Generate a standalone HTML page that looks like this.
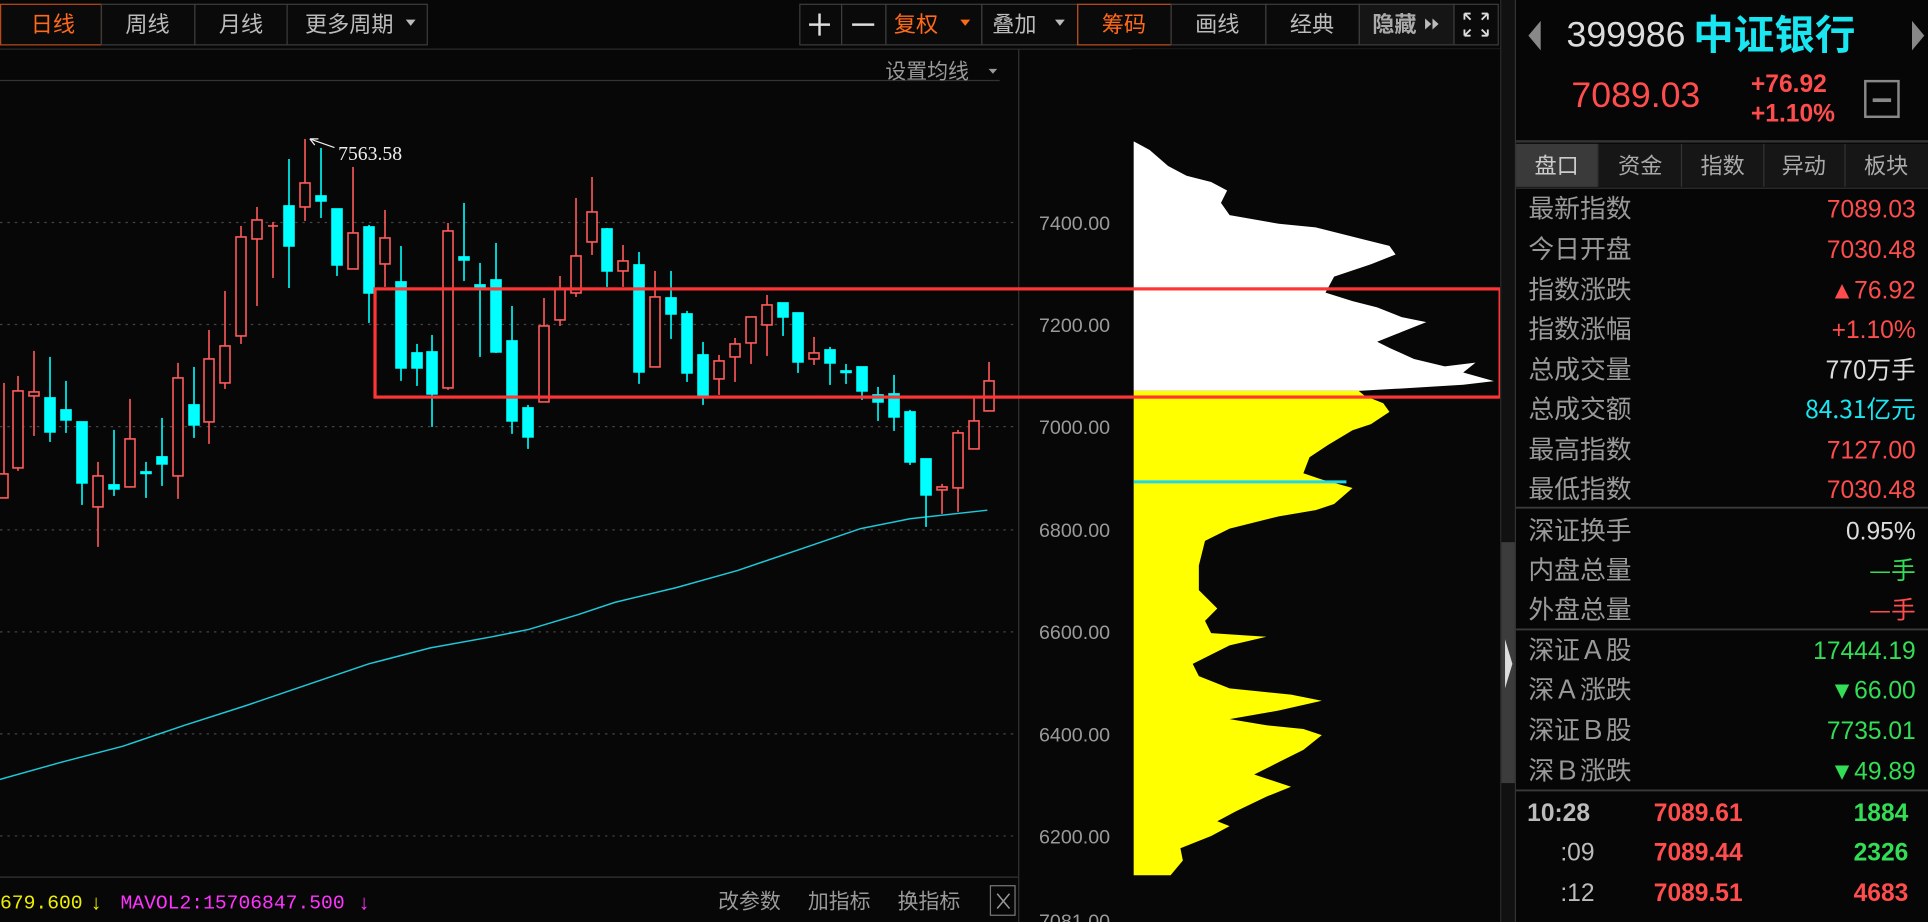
<!DOCTYPE html>
<html><head><meta charset="utf-8"><style>
html,body{margin:0;padding:0;background:#070707;overflow:hidden}
svg{display:block}
text{font-family:"Liberation Sans","Noto Sans CJK SC",sans-serif}
.cn{font-family:"Noto Sans CJK SC","WenQuanYi Zen Hei",sans-serif}
</style></head><body>
<svg width="1928" height="922" viewBox="0 0 1568 750" preserveAspectRatio="none" xmlns="http://www.w3.org/2000/svg">
<rect x="0" y="0" width="1568" height="750" fill="#070707"/>
<!-- toolbar -->
<g stroke="#3c3c3c" stroke-width="1" fill="#0a0a0a">
<rect x="0.5" y="3.5" width="82" height="33" stroke="#b84a1a"/>
<rect x="82.5" y="3.5" width="76" height="33"/>
<rect x="158.5" y="3.5" width="75" height="33"/>
<rect x="233.5" y="3.5" width="114" height="33"/>
<rect x="650.5" y="3.5" width="34" height="33"/>
<rect x="684.5" y="3.5" width="36" height="33"/>
<rect x="720.5" y="3.5" width="78" height="33"/>
<rect x="798.5" y="3.5" width="78" height="33"/>
<rect x="876.5" y="3.5" width="76" height="33" stroke="#c0501e"/>
<rect x="952.5" y="3.5" width="77" height="33"/>
<rect x="1029.5" y="3.5" width="76" height="33"/>
<rect x="1105.5" y="3.5" width="77" height="33" fill="#151515"/>
<rect x="1182.5" y="3.5" width="36" height="33"/>
</g>
<g class="cn" font-size="18" text-anchor="middle">
<text x="43" y="26" fill="#ff6a1a" class="cn">日线</text>
<text x="120" y="26" fill="#bbbbbb" class="cn">周线</text>
<text x="196" y="26" fill="#bbbbbb" class="cn">月线</text>
<text x="284" y="26" fill="#bbbbbb" class="cn">更多周期</text>
<text x="745" y="26" fill="#ff6a1a" class="cn">复权</text>
<text x="825" y="26" fill="#bbbbbb" class="cn">叠加</text>
<text x="914" y="26" fill="#ff6a1a" class="cn">筹码</text>
<text x="990" y="26" fill="#bbbbbb" class="cn">画线</text>
<text x="1067" y="26" fill="#bbbbbb" class="cn">经典</text>
<text x="1134" y="26" fill="#aaaaaa" font-weight="bold" class="cn">隐藏</text>
</g>
<path d="M330 16l8 0l-4 5z" fill="#bbb"/>
<path d="M781 16l8 0l-4 5z" fill="#ff6a1a"/>
<path d="M858 16l8 0l-4 5z" fill="#bbb"/>
<path d="M1159 15l5 4.5l-5 4.5zM1165 15l5 4.5l-5 4.5z" fill="#bbb"/>
<g stroke="#ddd" stroke-width="2" fill="none">
<path d="M658 20h17M666.5 11v18"/>
<path d="M693 20h18"/>
<path d="M1191 11h5M1191 11v5M1191 11l5 5M1210 11h-5M1210 11v5M1210 11l-5 5M1191 29h5M1191 29v-5M1191 29l5-5M1210 29h-5M1210 29v-5M1210 29l-5-5" stroke-width="1.5"/>
</g>
<!-- panel lines -->
<line x1="0" y1="40" x2="1220" y2="40" stroke="#2a2a2a"/>
<line x1="828.5" y1="40" x2="828.5" y2="750" stroke="#333"/>
<line x1="0" y1="65.5" x2="813" y2="65.5" stroke="#333"/>
<text x="720" y="64" font-size="17" fill="#999" class="cn">设置均线</text>
<path d="M804 56l7 0l-3.5 4z" fill="#999"/>
<!-- top right icons -->
<g>
<rect x="1103" y="48" width="10" height="2" fill="#ddd"/><rect x="1103" y="52" width="14" height="2" fill="#ddd"/>
<rect x="1103" y="56" width="17" height="2" fill="#ee0"/><rect x="1103" y="60" width="14" height="2" fill="#ee0"/>
<rect x="1103" y="64" width="8" height="2" fill="#ee0"/><rect x="1103" y="68" width="4" height="2" fill="#ee0"/>
<path d="M1133 47l17 18l-11 2l-6 8z" fill="#777"/>
<path d="M1163 50l14 12l-9 2l-5 7z" fill="#777"/>
<circle cx="1201" cy="58" r="8" fill="none" stroke="#777" stroke-width="3" stroke-dasharray="3 2.3"/>
<circle cx="1201" cy="58" r="4" fill="none" stroke="#777" stroke-width="2"/>
</g>
<!-- grid -->
<g stroke="#444" stroke-width="1" stroke-dasharray="2 4">
<line x1="0" y1="181" x2="828" y2="181"/><line x1="0" y1="264" x2="828" y2="264"/>
<line x1="0" y1="347" x2="828" y2="347"/><line x1="0" y1="431" x2="828" y2="431"/>
<line x1="0" y1="514" x2="828" y2="514"/><line x1="0" y1="597" x2="828" y2="597"/>
<line x1="0" y1="680" x2="828" y2="680"/>
</g>
<g font-family="Liberation Mono,monospace" font-size="16" fill="#9a9a9a" style="font-family:'Liberation Mono',monospace">
<text x="845" y="187">7400.00</text><text x="845" y="270">7200.00</text>
<text x="845" y="353">7000.00</text><text x="845" y="437">6800.00</text>
<text x="845" y="520">6600.00</text><text x="845" y="603">6400.00</text>
<text x="845" y="686">6200.00</text><text x="845" y="755">7081.00</text>
</g>
<!-- MA line -->
<polyline points="0,634 50,620 100,607 150,590 200,574 250,557 300,540 350,527 400,518 430,512 470,500 500,490 550,478 600,464 650,447 700,430 740,422 803,415" fill="none" stroke="#1fc8d8" stroke-width="1.2"/>
<!-- candles (original coords) -->
<g transform="scale(0.8133)" stroke-width="1.6">
<g stroke="#00ffff" fill="#00ffff">
<line x1="50" y1="357" x2="50" y2="442"/><rect x="45" y="398" width="10" height="34"/>
<line x1="66" y1="381" x2="66" y2="433"/><rect x="61" y="410" width="10" height="10"/>
<line x1="82" y1="422" x2="82" y2="505"/><rect x="77" y="422" width="10" height="61"/>
<line x1="114" y1="430" x2="114" y2="496"/><rect x="109" y="485" width="10" height="4"/>
<line x1="146" y1="462" x2="146" y2="498"/><rect x="141" y="472" width="10" height="1.5"/>
<line x1="162" y1="418" x2="162" y2="486"/><rect x="157" y="457" width="10" height="7"/>
<line x1="194" y1="367" x2="194" y2="438"/><rect x="189" y="405" width="10" height="20"/>
<line x1="289" y1="159" x2="289" y2="288"/><rect x="284" y="206" width="10" height="40"/>
<line x1="321" y1="148" x2="321" y2="218"/><rect x="316" y="196" width="10" height="5"/>
<line x1="337" y1="209" x2="337" y2="276"/><rect x="332" y="209" width="10" height="56"/>
<line x1="369" y1="225" x2="369" y2="323"/><rect x="364" y="227" width="10" height="66"/>
<line x1="401" y1="246" x2="401" y2="381"/><rect x="396" y="282" width="10" height="86"/>
<line x1="417" y1="344" x2="417" y2="386"/><rect x="412" y="353" width="10" height="15"/>
<line x1="432" y1="335" x2="432" y2="427"/><rect x="427" y="352" width="10" height="42"/>
<line x1="464" y1="203" x2="464" y2="281"/><rect x="459" y="257" width="10" height="3"/>
<line x1="480" y1="263" x2="480" y2="357"/><rect x="475" y="285" width="10" height="2"/>
<line x1="496" y1="243" x2="496" y2="353"/><rect x="491" y="280" width="10" height="72"/>
<line x1="512" y1="306" x2="512" y2="434"/><rect x="507" y="341" width="10" height="80"/>
<line x1="528" y1="405" x2="528" y2="449"/><rect x="523" y="408" width="10" height="29"/>
<line x1="607" y1="228" x2="607" y2="287"/><rect x="602" y="229" width="10" height="42"/>
<line x1="639" y1="252" x2="639" y2="384"/><rect x="634" y="265" width="10" height="107"/>
<line x1="671" y1="271" x2="671" y2="339"/><rect x="666" y="298" width="10" height="16"/>
<line x1="687" y1="311" x2="687" y2="382"/><rect x="682" y="314" width="10" height="59"/>
<line x1="703" y1="342" x2="703" y2="405"/><rect x="698" y="355" width="10" height="42"/>
<line x1="783" y1="303" x2="783" y2="336"/><rect x="778" y="303" width="10" height="14"/>
<line x1="798" y1="313" x2="798" y2="373"/><rect x="793" y="313" width="10" height="49"/>
<line x1="830" y1="347" x2="830" y2="385"/><rect x="825" y="350" width="10" height="13"/>
<line x1="846" y1="364" x2="846" y2="384"/><rect x="841" y="371" width="10" height="1.5"/>
<line x1="862" y1="367" x2="862" y2="400"/><rect x="857" y="367" width="10" height="24"/>
<line x1="878" y1="387" x2="878" y2="421"/><rect x="873" y="395" width="10" height="7"/>
<line x1="894" y1="375" x2="894" y2="431"/><rect x="889" y="394" width="10" height="23"/>
<line x1="910" y1="410" x2="910" y2="465"/><rect x="905" y="412" width="10" height="50"/>
<line x1="926" y1="459" x2="926" y2="527"/><rect x="921" y="459" width="10" height="36"/>
</g>
<g stroke="#ff5a5a" fill="#070707">
<line x1="4" y1="383" x2="4" y2="498"/><rect x="-1" y="474" width="9" height="24"/>
<line x1="18" y1="376" x2="18" y2="471"/><rect x="13" y="391" width="10" height="77"/>
<line x1="34" y1="351" x2="34" y2="436"/><rect x="29" y="392" width="10" height="4"/>
<line x1="98" y1="462" x2="98" y2="547"/><rect x="93" y="476" width="10" height="31"/>
<line x1="130" y1="399" x2="130" y2="487"/><rect x="125" y="439" width="10" height="48"/>
<line x1="178" y1="363" x2="178" y2="499"/><rect x="173" y="378" width="10" height="98"/>
<line x1="209" y1="330" x2="209" y2="444"/><rect x="204" y="359" width="10" height="63"/>
<line x1="225" y1="291" x2="225" y2="389"/><rect x="220" y="346" width="10" height="37"/>
<line x1="241" y1="226" x2="241" y2="344"/><rect x="236" y="237" width="10" height="99"/>
<line x1="257" y1="207" x2="257" y2="306"/><rect x="252" y="220" width="10" height="19"/>
<line x1="273" y1="222" x2="273" y2="278"/><line x1="268" y1="226" x2="278" y2="226"/>
<line x1="305" y1="139" x2="305" y2="221"/><rect x="300" y="183" width="10" height="24"/>
<line x1="353" y1="167" x2="353" y2="269"/><rect x="348" y="233" width="10" height="36"/>
<line x1="385" y1="210" x2="385" y2="287"/><rect x="380" y="238" width="10" height="26"/>
<line x1="448" y1="223" x2="448" y2="390"/><rect x="443" y="231" width="10" height="157"/>
<line x1="544" y1="298" x2="544" y2="402"/><rect x="539" y="326" width="10" height="76"/>
<line x1="560" y1="276" x2="560" y2="326"/><rect x="555" y="289" width="10" height="31"/>
<line x1="576" y1="198" x2="576" y2="297"/><rect x="571" y="256" width="10" height="37"/>
<line x1="592" y1="177" x2="592" y2="255"/><rect x="587" y="212" width="10" height="30"/>
<line x1="623" y1="245" x2="623" y2="287"/><rect x="618" y="261" width="10" height="10"/>
<line x1="655" y1="271" x2="655" y2="367"/><rect x="650" y="297" width="10" height="70"/>
<line x1="719" y1="355" x2="719" y2="395"/><rect x="714" y="361" width="10" height="18"/>
<line x1="735" y1="338" x2="735" y2="382"/><rect x="730" y="344" width="10" height="13"/>
<line x1="751" y1="317" x2="751" y2="364"/><rect x="746" y="317" width="10" height="26"/>
<line x1="767" y1="295" x2="767" y2="356"/><rect x="762" y="305" width="10" height="20"/>
<line x1="814" y1="337" x2="814" y2="365"/><rect x="809" y="353" width="10" height="6"/>
<line x1="942" y1="484" x2="942" y2="514"/><rect x="937" y="487" width="10" height="3"/>
<line x1="958" y1="430" x2="958" y2="512"/><rect x="953" y="433" width="10" height="55"/>
<line x1="974" y1="397" x2="974" y2="449"/><rect x="969" y="421" width="10" height="28"/>
<line x1="989" y1="362" x2="989" y2="411"/><rect x="984" y="381" width="10" height="30"/>
</g>
</g>
<!-- high label -->
<path d="M252 113l20 7M252 113l7 0M252 113l4 5" stroke="#eee" stroke-width="1" fill="none"/>
<text x="275" y="130" font-size="16" fill="#eee" style="font-family:'Liberation Serif',serif">7563.58</text>
<!-- chip distribution -->
<rect x="920" y="40" width="300" height="672" fill="#070707"/>
<polygon fill="#ffffff" points="922,115 935,122 950,135 965,143 985,148 998,155 993,165 1000,175 1040,182 1070,185 1110,195 1130,200 1135,207 1115,215 1085,225 1078,238 1100,245 1120,250 1140,258 1160,262 1140,270 1120,278 1130,283 1150,292 1175,298 1200,295 1190,303 1215,310 1190,313 1140,316 1105,318 922,318"/>
<polygon fill="#ffff00" points="922,318 1105,318 1110,322 1125,328 1130,335 1115,345 1100,350 1080,362 1065,372 1060,385 1075,390 1100,397 1085,410 1070,415 1040,420 1000,430 980,440 975,460 975,480 990,495 980,505 985,515 1030,518 1000,525 970,540 975,550 1000,560 1050,565 1075,570 1040,578 1000,585 1030,590 1060,593 1075,598 1060,610 1040,620 1020,630 1050,640 1030,648 1005,660 990,668 1000,672 985,680 960,690 962,700 952,712 922,712"/>
<line x1="922" y1="392" x2="1095" y2="392" stroke="#22d8e8" stroke-width="2.5"/>
<!-- red box -->
<rect x="305" y="235" width="915" height="88" fill="none" stroke="#ff3535" stroke-width="2.6"/>
<!-- bottom bar -->
<line x1="0" y1="713.5" x2="828" y2="713.5" stroke="#333"/>
<text x="0" y="739" font-size="16" fill="#eeee00" style="font-family:'Liberation Mono',monospace">679.600</text>
<text x="74" y="740" font-size="17" fill="#eeee00">↓</text>
<text x="98" y="739" font-size="16" fill="#ff33ff" style="font-family:'Liberation Mono',monospace">MAVOL2:15706847.500</text>
<text x="292" y="740" font-size="17" fill="#ff33ff">↓</text>
<g font-size="17" fill="#999" class="cn"><text x="584" y="739" class="cn">改参数</text><text x="657" y="739" class="cn">加指标</text><text x="730" y="739" class="cn">换指标</text></g>
<rect x="805.5" y="720.5" width="20" height="24" fill="none" stroke="#777"/>
<path d="M811 727l10 12M821 727l-10 12" stroke="#999" stroke-width="1.2"/>
<!-- scroll strip -->
<rect x="1220" y="0" width="13" height="750" fill="#111"/>
<line x1="1220.5" y1="0" x2="1220.5" y2="750" stroke="#2a2a2a"/>
<line x1="1232.5" y1="0" x2="1232.5" y2="750" stroke="#333"/>
<rect x="1221" y="441" width="11" height="196" fill="#3c3c3c"/>
<path d="M1224 520l6 20l-6 20z" fill="#ddd"/>
<!-- right panel -->
<rect x="1233" y="0" width="335" height="750" fill="#060606"/>
<path d="M1253 17l-10 12l10 12z" fill="#888"/>
<path d="M1555 17l10 12l-10 12z" fill="#888"/>
<text x="1274" y="38" font-size="29" fill="#ddd">399986</text>
<text x="1377" y="40" font-size="33" fill="#19e6f0" font-weight="bold" class="cn">中证银行</text>
<text x="1278" y="87" font-size="29" fill="#ff4d4d">7089.03</text>
<text x="1424" y="75" font-size="20" fill="#ff4d4d" font-weight="bold">+76.92</text>
<text x="1424" y="99" font-size="20" fill="#ff4d4d" font-weight="bold">+1.10%</text>
<rect x="1517" y="66" width="27" height="29" fill="none" stroke="#888" stroke-width="2"/>
<rect x="1523" y="80" width="15" height="3" fill="#888"/>
<line x1="1233" y1="115" x2="1568" y2="115" stroke="#333" stroke-width="2"/>
<rect x="1233" y="117" width="335" height="35" fill="#161616"/>
<rect x="1233" y="117" width="66" height="35" fill="#3a3a3a"/>
<g stroke="#333"><line x1="1299.5" y1="117" x2="1299.5" y2="152"/><line x1="1367.5" y1="117" x2="1367.5" y2="152"/><line x1="1434.5" y1="117" x2="1434.5" y2="152"/><line x1="1500.5" y1="117" x2="1500.5" y2="152"/></g>
<g font-size="18" fill="#aaa" text-anchor="middle" class="cn">
<text x="1266" y="141" fill="#ccc" class="cn">盘口</text><text x="1334" y="141" class="cn">资金</text><text x="1401" y="141" class="cn">指数</text><text x="1467" y="141" class="cn">异动</text><text x="1534" y="141" class="cn">板块</text>
</g>
<line x1="1233" y1="153" x2="1568" y2="153" stroke="#333"/>
<g font-size="21" fill="#999" class="cn">
<text x="1243" y="177" class="cn">最新指数</text><text x="1243" y="210" class="cn">今日开盘</text>
<text x="1243" y="243" class="cn">指数涨跌</text><text x="1243" y="275" class="cn">指数涨幅</text>
<text x="1243" y="308" class="cn">总成交量</text><text x="1243" y="340" class="cn">总成交额</text>
<text x="1243" y="373" class="cn">最高指数</text><text x="1243" y="405" class="cn">最低指数</text>
<text x="1243" y="439" class="cn">深证换手</text><text x="1243" y="471" class="cn">内盘总量</text>
<text x="1243" y="503" class="cn">外盘总量</text><text x="1243" y="536" class="cn">深证Ａ股</text>
<text x="1243" y="568" class="cn">深Ａ涨跌</text><text x="1243" y="601" class="cn">深证Ｂ股</text>
<text x="1243" y="634" class="cn">深Ｂ涨跌</text>
</g>
<g font-size="20" text-anchor="end">
<text x="1558" y="177" fill="#ff4d4d">7089.03</text><text x="1558" y="210" fill="#ff4d4d">7030.48</text>
<text x="1558" y="243" fill="#ff4d4d">▲76.92</text><text x="1558" y="275" fill="#ff4d4d">+1.10%</text>
<text x="1558" y="308" fill="#ddd" class="cn">770万手</text><text x="1558" y="340" fill="#19e6f0" class="cn">84.31亿元</text>
<text x="1558" y="373" fill="#ff4d4d">7127.00</text><text x="1558" y="405" fill="#ff4d4d">7030.48</text>
<text x="1558" y="439" fill="#ddd">0.95%</text><text x="1558" y="471" fill="#33dd55" class="cn">—手</text>
<text x="1558" y="503" fill="#ff4d4d" class="cn">—手</text><text x="1558" y="536" fill="#33dd55">17444.19</text>
<text x="1558" y="568" fill="#33dd55">▼66.00</text><text x="1558" y="601" fill="#33dd55">7735.01</text>
<text x="1558" y="634" fill="#33dd55">▼49.89</text>
</g>
<g stroke="#3a3a3a" stroke-width="1.5"><line x1="1233" y1="413" x2="1568" y2="413"/><line x1="1233" y1="512" x2="1568" y2="512"/><line x1="1233" y1="643" x2="1568" y2="643"/></g>
<g font-size="20" font-weight="bold">
<text x="1242" y="668" fill="#bbb">10:28</text><text x="1345" y="668" fill="#ff4d4d">7089.61</text><text x="1552" y="668" fill="#33dd55" text-anchor="end">1884</text>
<text x="1269" y="700" fill="#bbb" font-weight="normal">:09</text><text x="1345" y="700" fill="#ff4d4d">7089.44</text><text x="1552" y="700" fill="#33dd55" text-anchor="end">2326</text>
<text x="1269" y="733" fill="#bbb" font-weight="normal">:12</text><text x="1345" y="733" fill="#ff4d4d">7089.51</text><text x="1552" y="733" fill="#ff4d4d" text-anchor="end">4683</text>
</g>
</svg>
</body></html>
